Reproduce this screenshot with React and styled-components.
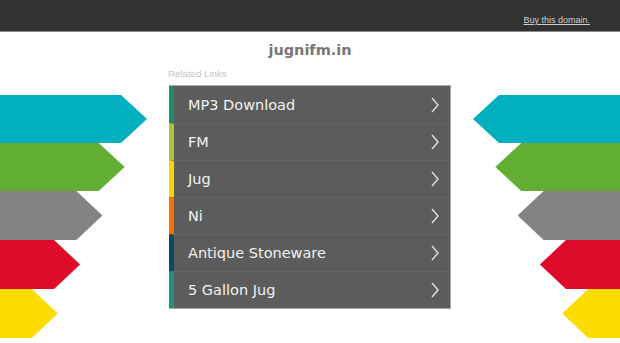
import React from 'react'
import styled, { createGlobalStyle } from 'styled-components'

const GlobalStyle = createGlobalStyle`
	html, body {
		margin: 0;
		padding: 0;
		background: #fff;
		overflow: hidden;
	}
	body {
		font-family: 'DejaVu Sans', Verdana, sans-serif;
	}
`

const Page = styled.div`
	width: 620px;
	height: 343px;
	overflow: hidden;
`

const TopBar = styled.div`
	height: 31px;
	background: #323232;
	border-bottom: 1px solid #8a8a8a;
	display: flex;
	justify-content: flex-end;
	align-items: flex-end;
	padding-right: 30px;
`

const BuyLink = styled.a`
	font-family: 'Liberation Sans', Arial, sans-serif;
	font-size: 9px;
	color: #cfcfcf;
	text-decoration: underline;
	margin-bottom: 6px;
`

const Main = styled.div`
	display: flex;
	justify-content: center;
	align-items: flex-start;
	gap: 22px;
`

const ArrowColumn = styled.div`
	width: 147px;
	flex: 0 0 147px;
	margin-top: 63px;
	display: flex;
	flex-direction: column;
	align-items: ${p => (p.$side === 'left' ? 'flex-start' : 'flex-end')};
`

const Arrow = styled.div`
	height: ${p => p.$h}px;
	background: ${p => p.$color};
	clip-path: ${p =>
		p.$side === 'left'
			? 'polygon(0 0, calc(100% - 26px) 0, 100% 50%, calc(100% - 26px) 100%, 0 100%)'
			: 'polygon(26px 0, 100% 0, 100% 100%, 26px 100%, 0 50%)'};
`

const Center = styled.div`
	width: 282px;
	flex: 0 0 282px;
	display: flex;
	flex-direction: column;
`

const Title = styled.h1`
	margin: 9px 0 0;
	font-size: 14.5px;
	line-height: 18px;
	font-weight: bold;
	color: #777;
	text-align: center;
`

const Caption = styled.div`
	margin: 9px 0 0 -1px;
	font-family: 'Liberation Sans', Arial, sans-serif;
	font-size: 9.7px;
	line-height: 12px;
	color: #c2c2c2;
`

const Panel = styled.div`
	margin-top: 5px;
	background: #5c5c5c;
	border: 1px solid #a8a8a8;
	border-left: none;
	display: flex;
	flex-direction: column;
`

const Row = styled.a`
	height: 37px;
	display: flex;
	align-items: center;
	justify-content: space-between;
	box-sizing: border-box;
	padding: 0 11px 0 14px;
	border-left: 5px solid ${p => p.$color};
	border-top: ${p => (p.$first ? 'none' : '1px solid #666')};
	color: #f2f2f2;
	font-size: 14.5px;
	text-decoration: none;
`

const Chevron = () => (
	<svg width="8" height="16" viewBox="0 0 8 16">
		<polyline points="1,1 7,8 1,15" fill="none" stroke="#e0e0e0" strokeWidth="1.4" />
	</svg>
)

const arrows = [
	{ color: '#02afbf', h: 48 },
	{ color: '#61ae33', h: 48 },
	{ color: '#838383', h: 49 },
	{ color: '#df0b2a', h: 49 },
	{ color: '#ffdc00', h: 49 },
]

const links = [
	{ label: 'MP3 Download', color: '#1f8c6e' },
	{ label: 'FM', color: '#a6c63a' },
	{ label: 'Jug', color: '#ffd500' },
	{ label: 'Ni', color: '#ff6d00' },
	{ label: 'Antique Stoneware', color: '#0d4a5c' },
	{ label: '5 Gallon Jug', color: '#23927a' },
]

const App = () => {
	return (
		<Page>
			<GlobalStyle />
			<TopBar>
				<BuyLink href="#">Buy this domain.</BuyLink>
			</TopBar>
			<Main>
				<ArrowColumn $side="left">
					{arrows.map((a, i) => (
						<Arrow key={i} $side="left" $color={a.color} $h={a.h} style={{ width: 147 - 22.3 * i }} />
					))}
				</ArrowColumn>
				<Center>
					<Title>jugnifm.in</Title>
					<Caption>Related Links</Caption>
					<Panel>
						{links.map((l, i) => (
							<Row key={l.label} href="#" $color={l.color} $first={i === 0}>
								<span>{l.label}</span>
								<Chevron />
							</Row>
						))}
					</Panel>
				</Center>
				<ArrowColumn $side="right">
					{arrows.map((a, i) => (
						<Arrow key={i} $side="right" $color={a.color} $h={a.h} style={{ width: 147 - 22.3 * i }} />
					))}
				</ArrowColumn>
			</Main>
		</Page>
	)
}

export default App
